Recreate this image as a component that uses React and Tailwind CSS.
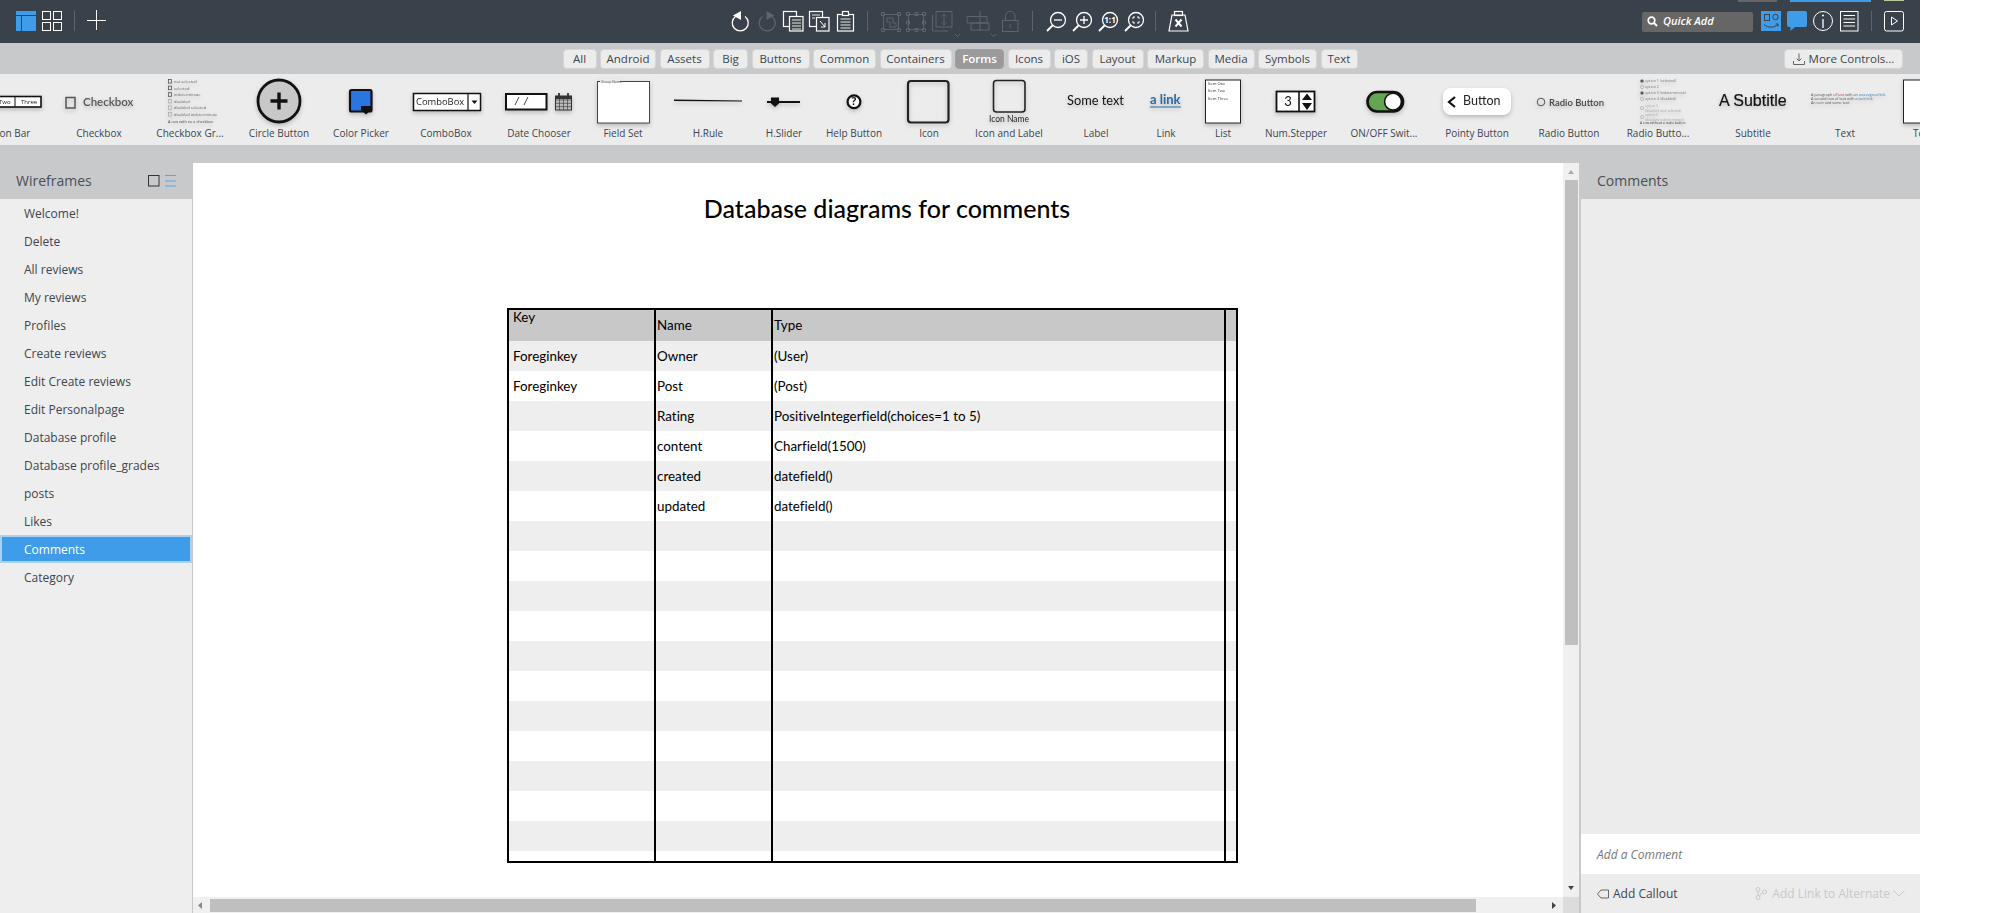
import React from "react";

const filters = [
  ["All", 34], ["Android", 56], ["Assets", 50], ["Big", 35], ["Buttons", 58], ["Common", 63], ["Containers", 72], ["Forms", 49],
  ["Icons", 43], ["iOS", 34], ["Layout", 52], ["Markup", 57], ["Media", 47], ["Symbols", 59], ["Text", 37],
];

const pages = ["Welcome!", "Delete", "All reviews", "My reviews", "Profiles", "Create reviews", "Edit Create reviews", "Edit Personalpage", "Database profile", "Database profile_grades", "posts", "Likes", "Comments", "Category"];

const rows = [
  ["Foreginkey", "Owner", "(User)"],
  ["Foreginkey", "Post", "(Post)"],
  ["", "Rating", "PositiveIntegerfield(choices=1 to 5)"],
  ["", "content", "Charfield(1500)"],
  ["", "created", "datefield()"],
  ["", "updated", "datefield()"],
  ...Array.from({ length: 11 }, () => ["", "", ""]),
];

const sans = "'Open Sans', 'Liberation Sans', sans-serif";

function TinyLines({ x, y, lines, fill = "#555", step = 6.6, size = 4 }) {
  return lines.map((l, i) => (
    <text key={i} x={x} y={y + i * step} fontSize={size} fill={fill} fontFamily={sans}>{l}</text>
  ));
}

// every preview is drawn in page coordinates, the viewBox moves it into its slot
const library = [
  {
    label: "Button Bar", w: 108, node: (
      <g>
        <rect x="-22" y="96.5" width="63" height="10.5" fill="#fff" stroke="#111" strokeWidth="1.6" />
        <line x1="15" y1="96" x2="15" y2="107" stroke="#111" />
        <text x="-1" y="104" fontSize="6" fill="#222" fontFamily={sans}>Two</text>
        <text x="21" y="104" fontSize="6" fill="#222" fontFamily={sans}>Three</text>
      </g>
    ),
  },
  {
    label: "Checkbox", w: 80, node: (
      <g>
        <rect x="66" y="97.5" width="9" height="10.5" fill="none" stroke="#555" strokeWidth="1.5" />
        <text x="83" y="106" fontSize="11.5" fontWeight="600" fill="#555" fontFamily="Lato, sans-serif">Checkbox</text>
      </g>
    ),
  },
  {
    label: "Checkbox Gr...", w: 102, node: (
      <g>
        {[0, 1, 2, 3, 4, 5].map((i) => (
          <rect key={i} x="168.5" y={79.5 + i * 6.6} width="3" height="3.6" fill="none" stroke={i < 3 ? "#444" : "#aaa"} strokeWidth="0.7" />
        ))}
        <TinyLines x={174} y={83} lines={["not selected", "selected", "indeterminate", "disabled", "disabled selected", "disabled indeterminate"]} fill="#666" />
        <text x="168" y="123" fontSize="3.8" fill="#444" fontFamily={sans}>A row with no a checkbox</text>
      </g>
    ),
  },
  {
    label: "Circle Button", w: 76, node: (
      <g>
        <circle cx="279" cy="101" r="21" fill="#c8c8c8" stroke="#111" strokeWidth="2.8" />
        <path d="M279 92.5V109.5M270.5 101H287.5" stroke="#111" strokeWidth="3.4" />
      </g>
    ),
  },
  {
    label: "Color Picker", w: 88, node: (
      <g>
        <rect x="350" y="90" width="21.5" height="21.5" rx="1.5" fill="#2a75e0" stroke="#111" strokeWidth="2.2" />
        <path d="M361 106H371V110L366 114.5L361 110Z" fill="#111" />
      </g>
    ),
  },
  {
    label: "ComboBox", w: 82, node: (
      <g>
        <rect x="413.5" y="93.5" width="67" height="17" fill="#fff" stroke="#111" strokeWidth="1.5" />
        <line x1="468" y1="93" x2="468" y2="111" stroke="#111" strokeWidth="1.2" />
        <text x="416" y="105" fontSize="9.4" fill="#222" fontFamily={sans}>ComboBox</text>
        <path d="M471.5 100.5H477.5L474.5 104Z" fill="#111" />
      </g>
    ),
  },
  {
    label: "Date Chooser", w: 104, node: (
      <g>
        <rect x="506" y="94" width="40.5" height="15.5" fill="#fff" stroke="#111" strokeWidth="2" />
        <text x="515" y="105" fontSize="10" fontStyle="italic" fill="#222" fontFamily={sans}>/</text>
        <text x="524" y="105" fontSize="10" fontStyle="italic" fill="#222" fontFamily={sans}>/</text>
        <rect x="555.5" y="96" width="16" height="14" fill="#bbb" stroke="#333" />
        <path d="M555.5 100H571.5M555.5 103.3H571.5M555.5 106.6H571.5M559.5 96V110M563.5 96V110M567.5 96V110" stroke="#333" strokeWidth="0.6" />
        <rect x="555.5" y="96" width="16" height="3" fill="#333" />
        <path d="M559 93V97M568 93V97" stroke="#333" strokeWidth="1.8" />
      </g>
    ),
  },
  {
    label: "Field Set", w: 64, node: (
      <g>
        <rect x="597.5" y="81.5" width="52" height="41.5" fill="#fff" stroke="#444" strokeWidth="1" />
        <rect x="600" y="79" width="20" height="4" fill="#ececec" />
        <text x="601" y="82.5" fontSize="3.5" fill="#555" fontFamily={sans}>Group Name</text>
      </g>
    ),
  },
  {
    label: "H.Rule", w: 106, node: <path d="M674 99.6L742 100.6V101.5L674 101Z" fill="#111" />,
  },
  {
    label: "H.Slider", w: 46, node: (
      <g>
        <line x1="767" y1="102" x2="800" y2="102" stroke="#111" strokeWidth="1.8" />
        <path d="M771 97.5H779V103.5L775 107L771 103.5Z" fill="#111" />
      </g>
    ),
  },
  {
    label: "Help Button", w: 94, node: (
      <g>
        <circle cx="854" cy="101.7" r="6.4" fill="#fff" stroke="#111" strokeWidth="2.2" />
        <text x="854" y="105.4" fontSize="10" fontWeight="700" textAnchor="middle" fill="#111" fontFamily={sans}>?</text>
      </g>
    ),
  },
  {
    label: "Icon", w: 56, node: <rect x="908" y="81" width="40.5" height="41.5" rx="3" fill="none" stroke="#222" strokeWidth="2.2" />,
  },
  {
    label: "Icon and Label", w: 104, node: (
      <g>
        <rect x="993.5" y="80.5" width="31.5" height="31.5" rx="3" fill="none" stroke="#222" strokeWidth="1.6" />
        <text x="1009" y="122" fontSize="8.5" textAnchor="middle" fill="#222" fontFamily="Lato, sans-serif">Icon Name</text>
      </g>
    ),
  },
  {
    label: "Label", w: 70, node: <text x="1067" y="104.5" fontSize="12.8" fill="#111" fontFamily="Lato, sans-serif">Some text</text>,
  },
  {
    label: "Link", w: 70, node: (
      <g>
        <text x="1150" y="104" fontSize="13" fontWeight="700" fill="#2b6ca3" fontFamily="Lato, sans-serif">a link</text>
        <line x1="1150" y1="107" x2="1181" y2="107" stroke="#2b6ca3" />
      </g>
    ),
  },
  {
    label: "List", w: 44, node: (
      <g>
        <rect x="1205.5" y="80" width="35" height="43" fill="#fff" stroke="#222" />
        <TinyLines x={1208} y={85} lines={["Item One", "Item Two", "Item Three"]} fill="#333" step={7.3} />
      </g>
    ),
  },
  {
    label: "Num.Stepper", w: 102, node: (
      <g>
        <rect x="1276.5" y="91.5" width="38" height="20" fill="#fff" stroke="#111" strokeWidth="1.8" />
        <line x1="1299" y1="91" x2="1299" y2="112" stroke="#111" strokeWidth="1.6" />
        <text x="1288" y="106" fontSize="13" textAnchor="middle" fill="#111" fontFamily="Lato, sans-serif">3</text>
        <path d="M1302 100L1307 93.5L1312 100ZM1302 103L1307 110L1312 103Z" fill="#111" />
      </g>
    ),
  },
  {
    label: "ON/OFF Swit...", w: 74, node: (
      <g>
        <rect x="1367.5" y="92" width="35.5" height="19.5" rx="9.7" fill="#62a64f" stroke="#111" strokeWidth="2.6" />
        <circle cx="1393" cy="101.7" r="8.4" fill="#fff" stroke="#111" strokeWidth="1.6" />
      </g>
    ),
  },
  {
    label: "Pointy Button", w: 112, node: (
      <g>
        <rect x="1443" y="88" width="68" height="27" rx="8" fill="#fff" />
        <path d="M1455 97L1449 102L1455 107" fill="none" stroke="#111" strokeWidth="2.2" />
        <text x="1463" y="105" fontSize="12.5" fill="#222" fontFamily="Lato, sans-serif">Button</text>
      </g>
    ),
  },
  {
    label: "Radio Button", w: 72, node: (
      <g>
        <circle cx="1541" cy="102" r="3.8" fill="none" stroke="#444" strokeWidth="0.9" />
        <text x="1549" y="105.5" fontSize="9.5" fontWeight="600" fill="#444" fontFamily="Lato, sans-serif">Radio Button</text>
      </g>
    ),
  },
  {
    label: "Radio Butto...", w: 106, node: (
      <g>
        {[81, 87, 93, 99, 108, 117].map((y, i) => (
          <circle key={y} cx="1642" cy={y} r="1.6" fill={i === 0 || i === 2 ? "#555" : "none"} stroke="#999" strokeWidth="0.5" />
        ))}
        <TinyLines x={1645} y={82} lines={["option 1 (selected)", "option 2", "option 3 (indeterminate)", "option 4 (disabled)"]} fill="#777" step={6} size={3.6} />
        <TinyLines x={1645} y={107} lines={["option 5", "(disabled and selected)", "option 6", "(disabled indeterminate)"]} fill="#aaa" step={4.6} size={3.4} />
        <text x="1640" y="124" fontSize="3.4" fill="#444" fontFamily={sans}>A row without a radio button</text>
      </g>
    ),
  },
  {
    label: "Subtitle", w: 84, node: <text x="1719" y="106" fontSize="16" fontWeight="500" fill="#111" stroke="#111" strokeWidth="0.2" fontFamily="'Liberation Sans', sans-serif">A Subtitle</text>,
  },
  {
    label: "Text", w: 100, node: (
      <g>
        <text x="1811" y="96" fontSize="3.7" fill="#555" fontFamily={sans}>A paragraph of <tspan fill="#e03030">text</tspan> with an <tspan fill="#3f7fc0">unassigned link</tspan></text>
        <text x="1811" y="100" fontSize="3.7" fill="#555" fontFamily={sans}>A second row of text with a <tspan fill="#3f7fc0">web link</tspan></text>
        <text x="1811" y="104" fontSize="3.7" fill="#555" fontFamily={sans}>An icon and some text</text>
      </g>
    ),
  },
  {
    label: "Text Area", w: 80, node: <rect x="1903.5" y="80" width="56" height="43" fill="#fff" stroke="#222" />,
  },
];

function Item({ left, w, label, children }) {
  return (
    <div className="flex shrink-0 flex-col items-center" style={{ width: w }}>
      <svg width={w} height="48" viewBox={`${left} 76 ${w} 48`} className="overflow-visible blur-[0.3px] drop-shadow-[0_2px_2px_rgba(0,0,0,0.22)]">
        {children}
      </svg>
      <div className="mt-[1px] h-[16px] whitespace-nowrap text-[10px] leading-[16px] text-[#3d454e]">{label}</div>
    </div>
  );
}

function LibraryStrip() {
  let left = -49;
  return (
    <div className="flex h-[71px] overflow-hidden bg-[#ececec] pt-[2px]">
      <div className="-ml-[49px] flex">
        {library.map((it) => {
          const el = <Item key={it.label} left={left} w={it.w} label={it.label}>{it.node}</Item>;
          left += it.w;
          return el;
        })}
      </div>
    </div>
  );
}

function ZoomGlass({ cx, children }) {
  return (
    <g fill="none" stroke="#fff" strokeWidth="1.3">
      <circle cx={cx} cy="20" r="7.5" />
      <path d={`M${cx - 5.5} 25.5L${cx - 11} 31`} strokeWidth="1.8" />
      {children}
    </g>
  );
}

function TopBar() {
  return (
    <div className="relative flex h-[43px] items-center bg-[#39414a]">
      <div className="absolute top-0 left-[1738px] h-[2px] w-[39px] bg-[#666]" />
      <div className="absolute top-0 left-[1790px] h-[2px] w-[81px] bg-[#3f9ce8]" />
      <div className="absolute top-0 left-[1884px] h-[1px] w-[20px] bg-[#b7c99a]" />

      <svg width="120" height="43" viewBox="0 0 120 43" className="shrink-0">
        <rect x="16" y="11" width="20" height="4" fill="#3f9ce8" />
        <rect x="16" y="16" width="5" height="15" fill="#3f9ce8" />
        <rect x="22" y="16" width="14" height="15" fill="#3f9ce8" />
        <g fill="none" stroke="#fff" strokeWidth="1">
          <rect x="42.5" y="11.5" width="8" height="8" />
          <rect x="53.5" y="11.5" width="8" height="8" />
          <rect x="42.5" y="22.5" width="8" height="8" />
          <rect x="53.5" y="22.5" width="8" height="8" />
        </g>
        <line x1="74.5" y1="11" x2="74.5" y2="31" stroke="#5d646c" />
        <path d="M96.5 10V30M87 20.5H106" stroke="#fff" strokeWidth="1" />
      </svg>

      <svg width="465" height="43" viewBox="730 0 465 43" className="ml-[610px] shrink-0">
        <path d="M735.5 16.5A8 8 0 1 0 745 16.5" fill="none" stroke="#fff" strokeWidth="1.3" />
        <path d="M741 11V20L733 15.5Z" fill="#fff" />
        <path d="M772 16.5A8 8 0 1 1 762.5 16.5" fill="none" stroke="#5d646c" strokeWidth="1.3" />
        <path d="M766.5 11V20L774.5 15.5Z" fill="#5d646c" />

        <g fill="#39414a" stroke="#fff" strokeWidth="1.2">
          <rect x="783.5" y="11.5" width="13" height="15" />
          <rect x="789.5" y="16.5" width="13.5" height="14.5" />
          <path d="M792 20H801M792 23H801M792 26H801M792 29H801" strokeWidth="0.9" />
          <rect x="809.5" y="11.5" width="13" height="15" />
          <path d="M812 15H820M812 18H815" strokeWidth="0.9" />
          <rect x="816.5" y="17.5" width="12.5" height="13.5" />
          <path d="M820 21L825 27M825 23V27H821" fill="none" strokeWidth="1" />
          <rect x="837.5" y="14.5" width="16" height="16.5" />
          <rect x="842.5" y="11.5" width="6" height="4" />
          <path d="M840.5 19H850.5M840.5 22H850.5M840.5 25H850.5M840.5 28H850.5" strokeWidth="0.9" />
        </g>

        <path d="M867.5 11V31M1032.5 11V31M1155.5 11V31" stroke="#5d646c" />

        <g fill="none" stroke="#5d646c" strokeWidth="1">
          <rect x="883.5" y="14.5" width="15" height="15" />
          <path d="M887 18H893V23H896V27H890V22H887Z" />
          <path d="M881.5 12.5h3v3h-3zM897.5 12.5h3v3h-3zM881.5 28.5h3v3h-3zM897.5 28.5h3v3h-3z" />
          <rect x="908.5" y="14.5" width="15" height="15" />
          <path d="M906.5 12.5h3v3h-3zM915 12.5h3v3h-3zM922.5 12.5h3v3h-3zM906.5 21h3v3h-3zM922.5 21h3v3h-3zM906.5 28.5h3v3h-3zM915 28.5h3v3h-3zM922.5 28.5h3v3h-3z" />
          <path d="M936 11.5H952V27H936ZM932.5 15V31H948" />
          <path d="M944 14V25M941.5 16.5L944 14L946.5 16.5M941.5 22.5L944 25L946.5 22.5" />
          <path d="M955 34L957.5 36.5L960 34" />
          <path d="M980 11V31M967 16.5H987V23H967ZM971 23H989V30H971Z" />
          <path d="M991 34L993.5 36.5L996 34" />
          <rect x="1002.5" y="20.5" width="15.5" height="11" />
          <path d="M1005.5 20.5V16A4.7 4.7 0 0 1 1015 16V20.5M1010.2 24V28" />
        </g>

        <ZoomGlass cx={1058}><path d="M1054 20H1062" /></ZoomGlass>
        <ZoomGlass cx={1084}><path d="M1080 20H1088M1084 16V24" /></ZoomGlass>
        <ZoomGlass cx={1110}>
          <text x="1110" y="23" fontSize="8" fontWeight="700" textAnchor="middle" fill="#fff" stroke="none" fontFamily={sans}>1:1</text>
        </ZoomGlass>
        <ZoomGlass cx={1136}><path d="M1133 19V17H1135M1137 17H1139V19M1139 21V23H1137M1135 23H1133V21" strokeWidth="1" /></ZoomGlass>

        <g fill="none" stroke="#fff" strokeWidth="1.2">
          <path d="M1172 15H1185L1188 31H1169Z" />
          <rect x="1174.5" y="11.5" width="8" height="4" />
          <path d="M1175.5 19.5L1181.5 26.5M1181.5 19.5L1175.5 26.5" strokeWidth="2" />
        </g>
      </svg>

      <div className="ml-[447px] flex h-[20px] w-[111px] shrink-0 items-center gap-[5px] rounded-[2px] bg-[#666] pl-[5px]">
        <svg width="11" height="11" viewBox="0 0 11 11">
          <circle cx="4.5" cy="4.5" r="3.3" fill="none" stroke="#fff" strokeWidth="1.7" />
          <path d="M7 7L10 10" stroke="#fff" strokeWidth="2" />
        </svg>
        <span className="text-[11px] font-semibold text-white italic">Quick Add</span>
      </div>

      <svg width="155" height="43" viewBox="1755 0 155 43" className="ml-[2px] shrink-0">
        <rect x="1761" y="11" width="20" height="20" fill="#3f9ce8" />
        <rect x="1764.5" y="14.5" width="5" height="6" fill="none" stroke="#39414a" />
        <circle cx="1775.5" cy="17" r="2.7" fill="none" stroke="#39414a" />
        <path d="M1764 24.5C1768 28 1774 28 1778 24.5M1775.5 24H1778V26.5" fill="none" stroke="#39414a" />
        <path d="M1789 11H1805A2 2 0 0 1 1807 13V25A2 2 0 0 1 1805 27H1795L1790.5 31V27H1789A2 2 0 0 1 1787 25V13A2 2 0 0 1 1789 11Z" fill="#3f9ce8" />
        <circle cx="1823" cy="21" r="9.5" fill="none" stroke="#fff" />
        <path d="M1823 19V28" stroke="#fff" strokeWidth="1.3" />
        <circle cx="1823" cy="15.5" r="1" fill="#fff" />
        <rect x="1840.5" y="11.5" width="17.5" height="19.5" fill="none" stroke="#fff" />
        <path d="M1843.5 15.5H1855M1843.5 19H1855M1843.5 22.5H1855M1843.5 26H1855" stroke="#fff" />
        <path d="M1871.5 11V31" stroke="#5d646c" />
        <rect x="1884.5" y="11.5" width="19" height="19.5" rx="2" fill="none" stroke="#fff" />
        <path d="M1891.5 17V25L1897.5 21Z" fill="none" stroke="#fff" />
      </svg>
    </div>
  );
}

function FilterBar() {
  return (
    <div className="flex h-[31px] items-center bg-[#c8c9cb] text-[11.5px] text-[#3d454e]">
      <div className="flex-1 pl-[17px]" />
      <div className="flex gap-[3.5px]">
        {filters.map(([f, w]) => (
          <div
            key={f}
            style={{ width: w }}
            className={
              f === "Forms"
                ? "flex h-[20px] items-center justify-center rounded-[4px] border border-[#a0a0a0] bg-[#9a9a9a] font-semibold text-white"
                : "flex h-[20px] items-center justify-center rounded-[4px] border border-[#d6d6d6] bg-[#ececec]"
            }
          >
            {f}
          </div>
        ))}
      </div>
      <div className="flex flex-1 justify-end pr-[17px]">
        <div className="flex h-[20px] w-[119px] items-center justify-center gap-[4px] rounded-[4px] border border-[#d6d6d6] bg-[#ececec]">
          <svg width="12" height="12" viewBox="0 0 12 12" fill="none" stroke="#666">
            <path d="M6 0.5V8M3.5 5.5L6 8L8.5 5.5M0.5 8V11.5H11.5V8" />
          </svg>
          <span>More Controls...</span>
        </div>
      </div>
    </div>
  );
}

function Sidebar() {
  return (
    <div className="flex w-[193px] shrink-0 flex-col border-r border-[#c8c8c8] bg-[#eeeeee]">
      <div className="flex h-[54px] items-center justify-between bg-[#c8c9cb] pt-[17px] pr-[16px] pl-[16px]">
        <span className="text-[14px] text-[#4a4f55]">Wireframes</span>
        <svg width="28" height="12" viewBox="0 0 28 12" fill="none">
          <rect x="0.5" y="0.5" width="10.5" height="10.5" stroke="#333" />
          <path d="M17 0.5H28M17 6H28M17 11H28" stroke="#5aa7e8" />
        </svg>
      </div>
      {pages.map((p) => (
        <div
          key={p}
          className={
            p === "Comments"
              ? "flex h-[28px] items-center border-2 border-[#a9d2f5] bg-[#3f9ce8] pt-[2px] pl-[22px] text-[12px] text-white"
              : "flex h-[28px] items-center pt-[2px] pl-[24px] text-[12px] text-[#3d454e]"
          }
        >
          {p}
        </div>
      ))}
    </div>
  );
}

function Canvas() {
  const cols = "grid-cols-[147px_117px_453px_10px]";
  const cell = "flex items-center border-r-2 border-black pl-[1px]";
  return (
    <div className="min-w-0 flex-1 overflow-hidden bg-white pt-[30px] [font-family:Lato,sans-serif] [font-variant-ligatures:none]">
      <div className="ml-[394px] h-[30px] w-[600px] text-center text-[25px] leading-[30px] font-medium text-black">
        Database diagrams for comments
      </div>
      <div className="mt-[85px] ml-[314px] w-[731px] border-2 border-black text-[13.4px] text-black">
        <div className={`grid h-[31px] bg-[#c8c8c8] ${cols}`}>
          <div className="border-r-2 border-black pl-[4px] leading-[14px]">Key</div>
          <div className={cell}>Name</div>
          <div className={cell}>Type</div>
          <div />
        </div>
        {rows.map((r, i) => (
          <div key={i} className={i % 2 === 0 ? `grid h-[30px] bg-[#eeeeee] ${cols}` : `grid h-[30px] bg-white ${cols}`}>
            <div className="flex items-center border-r-2 border-black pl-[4px]">{r[0]}</div>
            <div className={cell}>{r[1]}</div>
            <div className={cell}>{r[2]}</div>
            <div />
          </div>
        ))}
        <div className={`grid h-[10px] bg-white ${cols}`}>
          <div className="border-r-2 border-black" />
          <div className="border-r-2 border-black" />
          <div className="border-r-2 border-black" />
          <div />
        </div>
      </div>
    </div>
  );
}

function VScroll() {
  return (
    <div className="flex w-[16px] shrink-0 flex-col items-center bg-[#f0f0f0]">
      <svg width="8" height="17" viewBox="0 0 8 17" className="shrink-0">
        <path d="M1 11L4 7L7 11Z" fill="#aaa" />
      </svg>
      <div className="h-[465px] w-[13px] bg-[#bfbfbf]" />
      <div className="flex-1" />
      <svg width="8" height="17" viewBox="0 0 8 17" className="shrink-0">
        <path d="M1 6H7L4 10Z" fill="#444" />
      </svg>
    </div>
  );
}

function HScroll() {
  return (
    <div className="flex h-[16px] shrink-0 items-center bg-[#f0f0f0]">
      <svg width="17" height="16" viewBox="0 0 17 16" className="shrink-0">
        <path d="M9 5V12L5 8.5Z" fill="#888" />
      </svg>
      <div className="h-[13px] w-[1266px] bg-[#bfbfbf]" />
      <div className="flex-1" />
      <svg width="16" height="16" viewBox="0 0 16 16" className="shrink-0">
        <path d="M5 5V12L9 8.5Z" fill="#444" />
      </svg>
      <div className="h-[16px] w-[16px] bg-[#dcdcdc]" />
    </div>
  );
}

function CommentsPanel() {
  return (
    <div className="flex w-[341px] shrink-0 flex-col border-l-2 border-[#c8c9cb] bg-[#ececec] text-[12px]">
      <div className="flex h-[54px] shrink-0 items-center bg-[#c8c9cb] pt-[17px] pl-[16px] text-[14px] text-[#4a4f55]">Comments</div>
      <div className="flex-1" />
      <div className="flex h-[40px] items-center bg-white pt-[2px] pl-[16px] text-[#777] italic">Add a Comment</div>
      <div className="flex h-[39px] items-center pl-[16px] pr-[15px]">
        <svg width="12" height="10" viewBox="0 0 12 10" fill="none" stroke="#666" className="mr-[4px]">
          <path d="M0.5 5L4 1H11.5V9H4Z" strokeLinejoin="round" />
        </svg>
        <span className="text-[#3d454e]">Add Callout</span>
        <svg width="12" height="13" viewBox="0 0 12 13" fill="none" stroke="#c8c8c8" className="mr-[5px] ml-auto">
          <circle cx="3" cy="2.5" r="2" />
          <circle cx="3" cy="10.5" r="2" />
          <circle cx="9.5" cy="5" r="2" />
          <path d="M3 4.5V8.5M7.5 5.5L4.5 9" />
        </svg>
        <span className="text-[#c8c8c8]">Add Link to Alternate</span>
        <svg width="12" height="7" viewBox="0 0 12 7" fill="none" stroke="#c8c8c8" className="ml-[3px]">
          <path d="M0.5 0.5L6 6L11.5 0.5" />
        </svg>
      </div>
    </div>
  );
}

export default function App() {
  return (
    <div className="flex h-[913px] w-[1920px] flex-col overflow-hidden" style={{ fontFamily: sans }}>
      <TopBar />
      <FilterBar />
      <LibraryStrip />
      <div className="flex min-h-0 flex-1 bg-[#c8c9cb]">
        <Sidebar />
        <div className="flex min-w-0 flex-1 flex-col pt-[18px]">
          <div className="flex min-h-0 flex-1">
            <Canvas />
            <VScroll />
          </div>
          <HScroll />
        </div>
        <CommentsPanel />
      </div>
    </div>
  );
}
